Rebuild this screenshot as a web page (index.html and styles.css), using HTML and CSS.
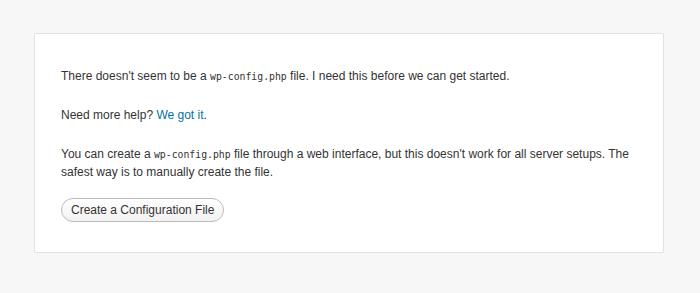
FILE: index.html
```html
<!DOCTYPE html>
<html lang="en">
<head>
<meta charset="utf-8">
<title>WordPress › Error</title>
<link rel="stylesheet" href="styles.css">
</head>
<body>
<div class="card">
  <p>There doesn't seem to be a <code>wp-config.php</code> file. I need this before we can get started.</p>
  <p>Need more help? <a href="#">We got it</a>.</p>
  <p class="last">You can create a <code>wp-config.php</code> file through a web interface, but this doesn't work for all server setups. The safest way is to manually create the file.</p>
  <div class="step"><a href="#" class="button">Create a Configuration File</a></div>
</div>
</body>
</html>
```
FILE: styles.css
```css
html, body {
  margin: 0;
  padding: 0;
  background: #f7f7f7;
}
body {
  font-family: "Liberation Sans", Arial, sans-serif;
  font-size: 12px;
  line-height: 18px;
  color: #333;
  padding-top: 33px;
}
.card {
  margin: 0 36px 0 34px;
  background: #fff;
  border: 1px solid #e2e2e2;
  border-radius: 2px;
  box-shadow: 0 1px 1px rgba(0,0,0,0.04);
  padding: 33px 26px 30px;
}
p {
  margin: 0 0 21px;
}
p.last {
  margin-bottom: 17px;
}
code {
  font-family: "DejaVu Sans Mono", monospace;
  font-size: 9.8px;
  line-height: 1;
  color: #333;
}
a {
  color: #0074a2;
  text-decoration: none;
}
.step {
  display: flex;
}
.button {
  display: inline-flex;
  align-items: center;
  box-sizing: border-box;
  height: 24px;
  padding: 0 9px;
  border: 1px solid #bbb;
  border-radius: 12px;
  background: linear-gradient(#fefefe, #f2f2f2);
  box-shadow: inset 0 1px 0 #fff;
  color: #333;
  font-size: 12px;
}
```
